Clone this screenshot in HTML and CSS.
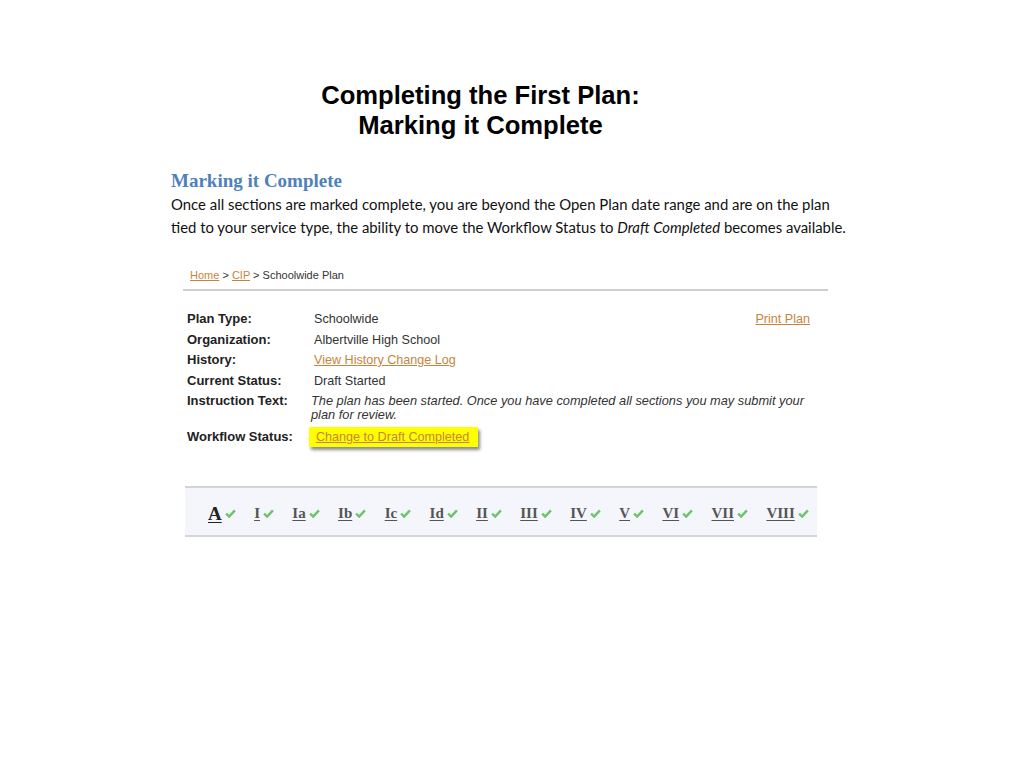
FILE: index.html
```html
<!DOCTYPE html>
<html>
<head>
<meta charset="utf-8">
<link rel="stylesheet" href="styles.css">
</head>
<body>
<div class="title">
  <div>Completing the First Plan:</div>
  <div>Marking it Complete</div>
</div>
<div class="doc">
  <h2 class="heading">Marking it Complete</h2>
  <p class="body">Once all sections are marked complete, you are beyond the Open Plan date range and are on the plan<br>tied to your service type, the ability to move the Workflow Status to <i>Draft Completed</i> becomes available.</p>
</div>
<div class="shot">
  <div class="crumbs"><a href="#">Home</a> &gt; <a href="#">CIP</a> &gt; Schoolwide Plan</div>
  <div class="rule"></div>
  <div class="info">
    <div class="row"><span class="lbl">Plan Type:</span><span class="val">Schoolwide</span><a class="print" href="#">Print Plan</a></div>
    <div class="row"><span class="lbl">Organization:</span><span class="val">Albertville High School</span></div>
    <div class="row"><span class="lbl">History:</span><span class="val"><a href="#">View History Change Log</a></span></div>
    <div class="row"><span class="lbl">Current Status:</span><span class="val">Draft Started</span></div>
    <div class="row instr"><span class="lbl">Instruction Text:</span><span class="val itl">The plan has been started. Once you have completed all sections you may submit your<br>plan for review.</span></div>
    <div class="row wf"><span class="lbl">Workflow Status:</span><span class="val"><a class="btn" href="#">Change to Draft Completed</a></span></div>
  </div>
  <div class="tabs">
    <span class="tab big"><u>A</u><svg class="ck" viewBox="0 0 10 8"><path d="M1 4.2 L3.8 6.8 L9 1.2"/></svg></span>
    <span class="tab"><u>I</u><svg class="ck" viewBox="0 0 10 8"><path d="M1 4.2 L3.8 6.8 L9 1.2"/></svg></span>
    <span class="tab"><u>Ia</u><svg class="ck" viewBox="0 0 10 8"><path d="M1 4.2 L3.8 6.8 L9 1.2"/></svg></span>
    <span class="tab"><u>Ib</u><svg class="ck" viewBox="0 0 10 8"><path d="M1 4.2 L3.8 6.8 L9 1.2"/></svg></span>
    <span class="tab"><u>Ic</u><svg class="ck" viewBox="0 0 10 8"><path d="M1 4.2 L3.8 6.8 L9 1.2"/></svg></span>
    <span class="tab"><u>Id</u><svg class="ck" viewBox="0 0 10 8"><path d="M1 4.2 L3.8 6.8 L9 1.2"/></svg></span>
    <span class="tab"><u>II</u><svg class="ck" viewBox="0 0 10 8"><path d="M1 4.2 L3.8 6.8 L9 1.2"/></svg></span>
    <span class="tab"><u>III</u><svg class="ck" viewBox="0 0 10 8"><path d="M1 4.2 L3.8 6.8 L9 1.2"/></svg></span>
    <span class="tab"><u>IV</u><svg class="ck" viewBox="0 0 10 8"><path d="M1 4.2 L3.8 6.8 L9 1.2"/></svg></span>
    <span class="tab"><u>V</u><svg class="ck" viewBox="0 0 10 8"><path d="M1 4.2 L3.8 6.8 L9 1.2"/></svg></span>
    <span class="tab"><u>VI</u><svg class="ck" viewBox="0 0 10 8"><path d="M1 4.2 L3.8 6.8 L9 1.2"/></svg></span>
    <span class="tab"><u>VII</u><svg class="ck" viewBox="0 0 10 8"><path d="M1 4.2 L3.8 6.8 L9 1.2"/></svg></span>
    <span class="tab"><u>VIII</u><svg class="ck" viewBox="0 0 10 8"><path d="M1 4.2 L3.8 6.8 L9 1.2"/></svg></span>
  </div>
</div>
</body>
</html>
```
FILE: styles.css
```css
html, body { margin: 0; padding: 0; background: #fff; }
body { width: 1024px; height: 768px; overflow: hidden; }

.title {
  width: 961px;
  padding-top: 80px;
  text-align: center;
  font-family: "Liberation Sans", Arial, sans-serif;
  font-weight: bold;
  font-size: 25.6px;
  line-height: 30px;
  color: #000;
}

.doc { margin: 30px 0 0 171px; }
.heading {
  margin: 0;
  font-family: "Liberation Serif", "Times New Roman", serif;
  font-weight: bold;
  font-size: 19px;
  line-height: 22px;
  color: #4f81bd;
}
.body {
  margin: 1px 0 0 0;
  font-family: Lato, "Liberation Sans", sans-serif;
  font-size: 14.9px;
  line-height: 23px;
  color: #111;
}

.shot { margin: 29px 0 0 183px; width: 645px; font-family: "Liberation Sans", Arial, sans-serif; }
.crumbs { padding-left: 7px; font-size: 11px; line-height: 14px; color: #333; }
.crumbs a, .val a, .print { color: #c8843c; }
.rule { margin-top: 7px; height: 2px; background: #cfcfcf; }

.info { padding: 21px 0 0 4px; font-size: 12.6px; color: #333; }
.row { display: flex; align-items: flex-start; line-height: 14px; margin-bottom: 6.5px; }
.lbl { width: 127px; flex: none; font-weight: bold; color: #222; font-size: 13px; }
.val { flex: 1; }
.print { margin-right: 18px; }
.itl { font-style: italic; font-size: 12.8px; line-height: 14px; margin-left: -3px; }
.instr { margin-bottom: 5px; }
.wf { align-items: center; }
.btn {
  display: inline-block;
  margin-left: -5px;
  padding: 3px 9px 3px 7px;
  background: #ffff00;
  box-shadow: 2px 3px 3px rgba(0,0,0,0.45);
}

.tabs {
  margin: 39px 0 0 2px;
  width: 632px;
  height: 51px;
  box-sizing: border-box;
  border-top: 2px solid #d4d4d4;
  border-bottom: 2px solid #d4d4d4;
  background: #f5f6fb;
  display: flex;
  align-items: center;
  padding: 4px 0 0 23px;
  font-family: "Liberation Serif", "Times New Roman", serif;
  font-weight: bold;
  font-size: 15px;
  color: #555;
}
.tab { display: inline-flex; align-items: center; margin-right: 18.4px; }
.tab u { text-decoration-thickness: 1px; text-underline-offset: 2px; }
.tab.big { font-size: 19px; color: #222; }
.ck { width: 11px; height: 9px; margin-left: 3px; fill: none; stroke: #6dc46d; stroke-width: 2.2; }
```
